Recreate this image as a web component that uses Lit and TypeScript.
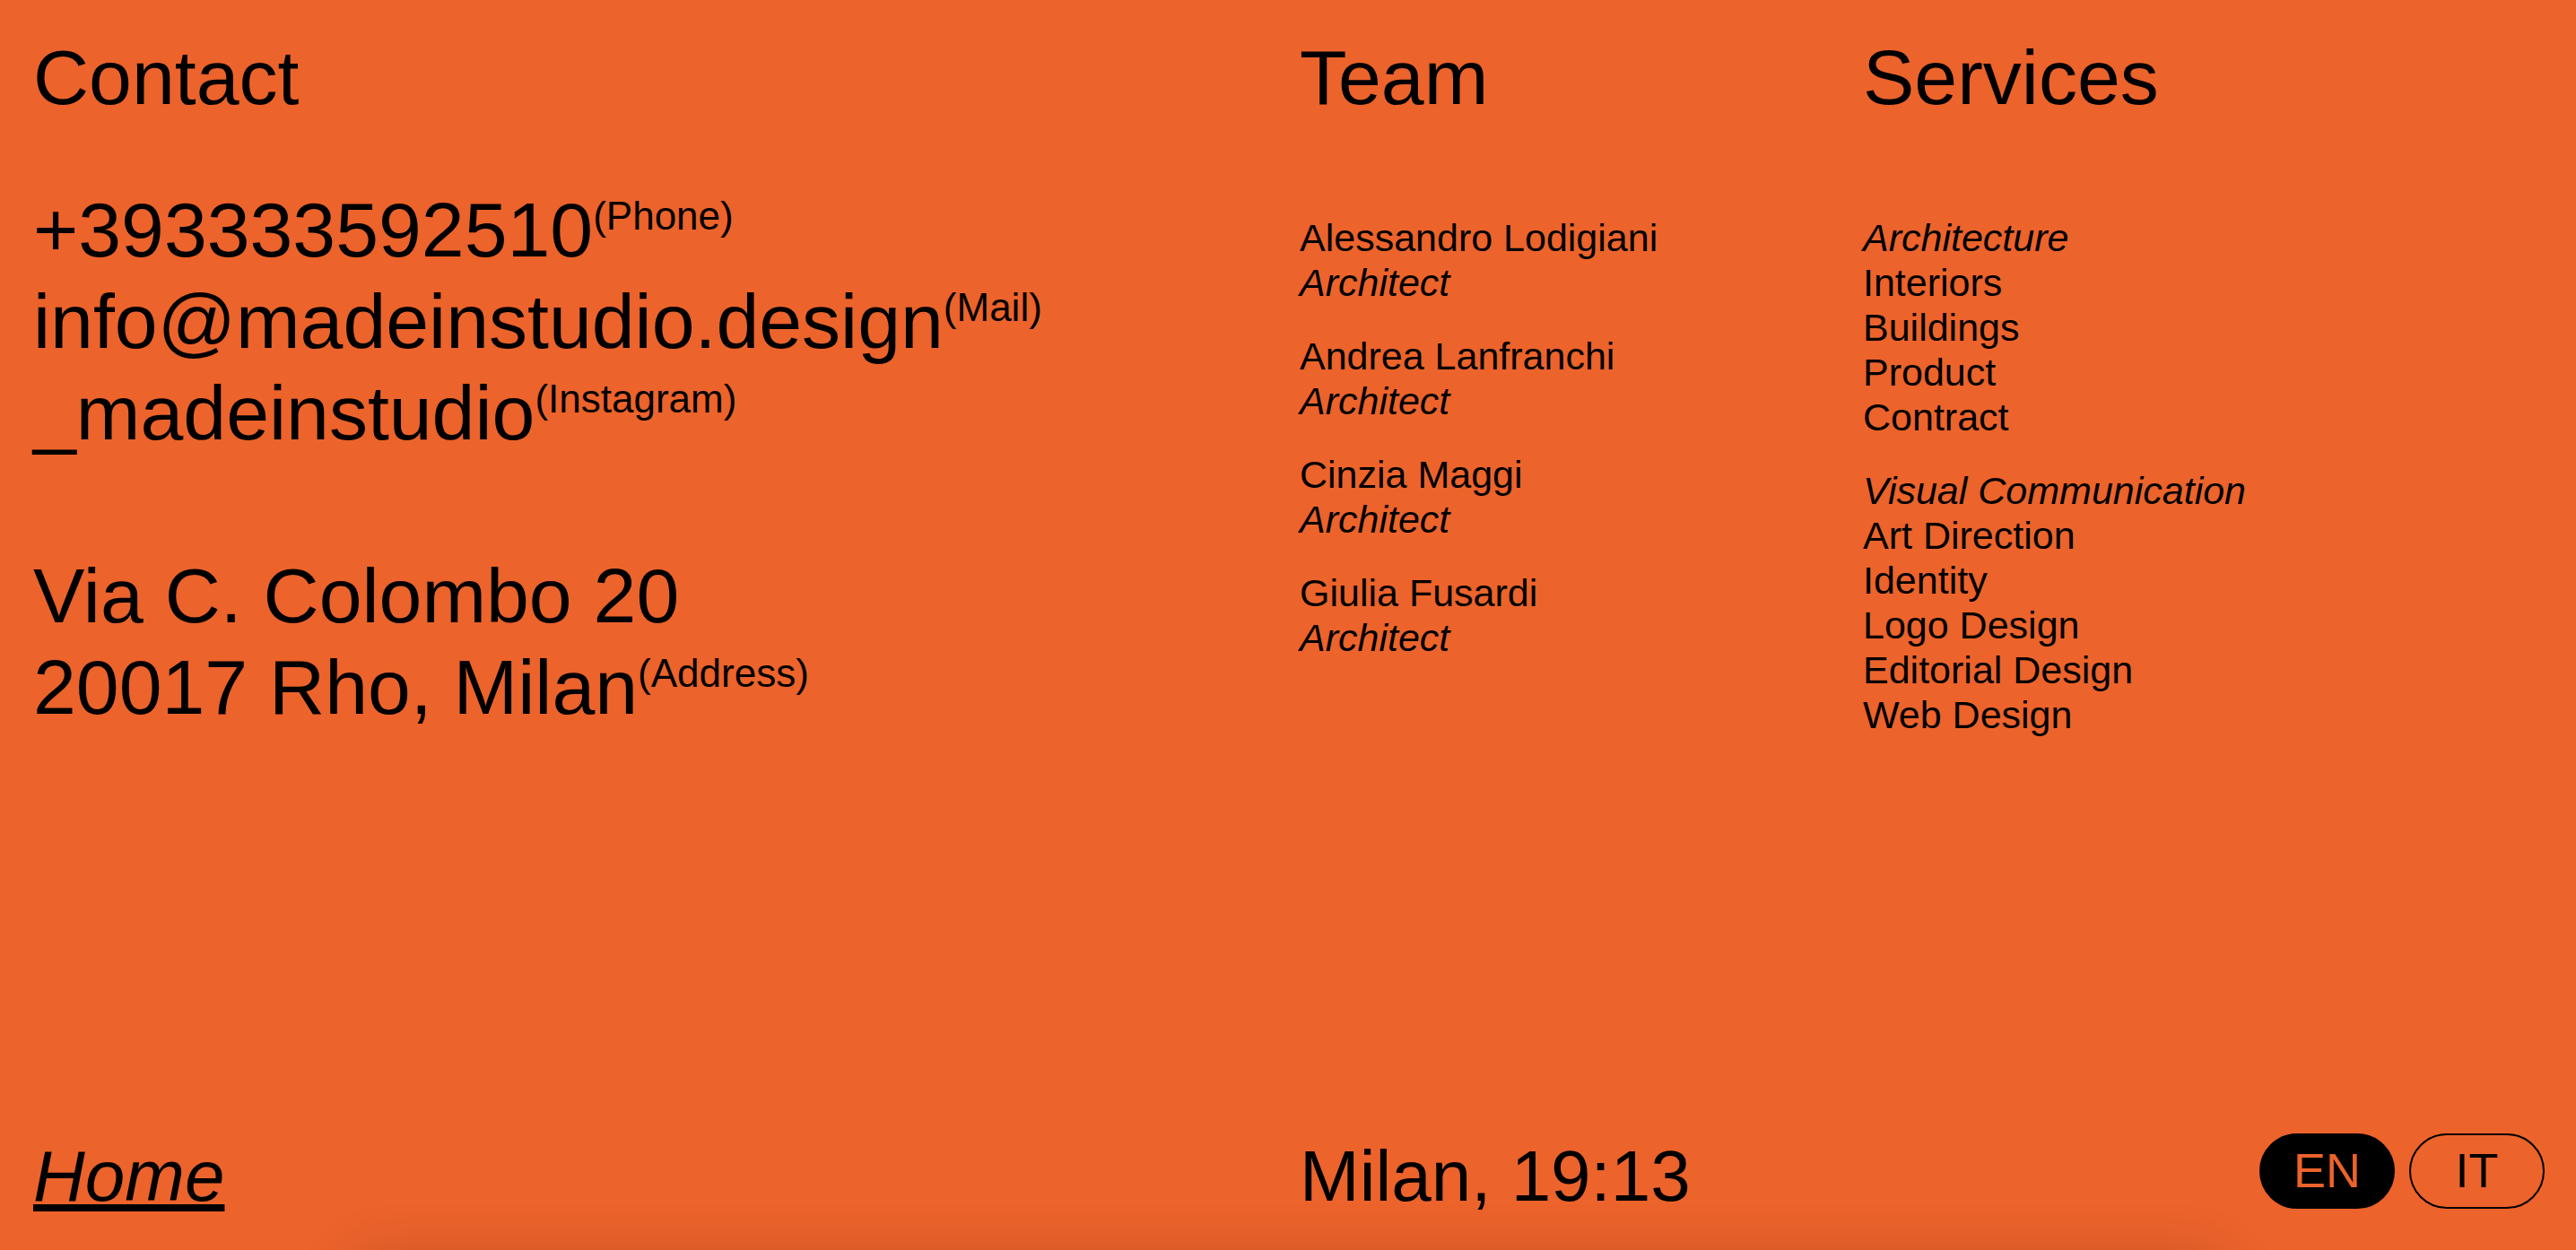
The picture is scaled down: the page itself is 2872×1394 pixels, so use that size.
import { LitElement, html, css } from "lit";
import { customElement, state } from "lit/decorators.js";

const team = ["Alessandro Lodigiani", "Andrea Lanfranchi", "Cinzia Maggi", "Giulia Fusardi"];

const services = [
  { area: "Architecture", items: ["Interiors", "Buildings", "Product", "Contract"] },
  { area: "Visual Communication", items: ["Art Direction", "Identity", "Logo Design", "Editorial Design", "Web Design"] },
];

@customElement("app-root")
class AppRoot extends LitElement {
  static styles = css`
    :host {
      --ink: #000;
      --paper: #ec632b;
      display: block;
      font-family: "Liberation Sans", Arial, Helvetica, sans-serif;
      color: var(--ink);
    }
    * { box-sizing: border-box; }
    h2, h3, p, ul, address { margin: 0; padding: 0; font-size: inherit; font-weight: 400; font-style: normal; }
    ul { list-style: none; }
    a { color: inherit; text-decoration: none; }
    .page {
      position: relative;
      overflow: hidden;
      min-height: 100vh;
      display: flex;
      flex-direction: column;
      justify-content: space-between;
      padding: 35px 35px 34px 37px;
      background: var(--paper);
    }
    /* soft shade rising from the bottom edge */
    .page::after {
      content: "";
      position: absolute;
      left: 14%;
      right: 14%;
      bottom: -220px;
      height: 200px;
      box-shadow: 0 0 68px rgba(0, 0, 0, 0.25);
      pointer-events: none;
    }
    .columns { display: grid; grid-template-columns: 1412fr 628fr 760fr; }
    .title { font-size: 86px; line-height: 102px; }
    .contact { margin-top: 68px; font-size: 86px; line-height: 102px; }
    .contact p { white-space: nowrap; }
    .contact .place { margin-top: 102px; }
    .note { font-size: 44px; line-height: 0; vertical-align: 30px; }
    .lists { display: flex; flex-direction: column; gap: 32px; margin-top: 103px; font-size: 43px; line-height: 50px; }
    .lists .slant { font-style: italic; }
    .footer { display: grid; grid-template-columns: 1412fr 1388fr; font-size: 80px; line-height: 96px; }
    .home {
      justify-self: start;
      font-style: italic;
      text-decoration: underline;
      text-decoration-thickness: 8px;
      text-underline-offset: 4px;
      text-decoration-skip-ink: none;
    }
    .right { display: flex; justify-content: space-between; align-items: flex-start; }
    .languages { display: flex; gap: 16px; }
    .language {
      width: 151px;
      height: 84px;
      padding: 0 0 2px;
      border: 2px solid var(--ink);
      border-radius: 42px;
      background: transparent;
      color: var(--ink);
      font-family: inherit;
      font-size: 54px;
      line-height: 78px;
      cursor: pointer;
    }
    .language.active { background: var(--ink); color: var(--paper); }
  `;

  @state() private language = "EN";

  private languageButton(code: string) {
    const active = this.language === code;
    return html`<button type="button" class="language ${active ? "active" : ""}" aria-pressed=${active}
      @click=${() => (this.language = code)}>${code}</button>`;
  }

  render() {
    return html`
      <div class="page">
        <main class="columns">
          <section>
            <h2 class="title">Contact</h2>
            <address class="contact">
              <p><a href="tel:+393333592510">+393333592510</a><span class="note">(Phone)</span></p>
              <p><a href="mailto:info@madeinstudio.design">info@madeinstudio.design</a><span class="note">(Mail)</span></p>
              <p><a href="#instagram">_madeinstudio</a><span class="note">(Instagram)</span></p>
              <p class="place">Via C. Colombo 20<br />20017 Rho, Milan<span class="note">(Address)</span></p>
            </address>
          </section>
          <section>
            <h2 class="title">Team</h2>
            <ul class="lists">
              ${team.map((name) => html`<li>${name}<p class="slant">Architect</p></li>`)}
            </ul>
          </section>
          <section>
            <h2 class="title">Services</h2>
            <div class="lists">
              ${services.map((group) => html`<div>
                <h3 class="slant">${group.area}</h3>
                <ul>${group.items.map((item) => html`<li>${item}</li>`)}</ul>
              </div>`)}
            </div>
          </section>
        </main>
        <footer class="footer">
          <a class="home" href="#home">Home</a>
          <div class="right">
            <p>Milan, 19:13</p>
            <div class="languages">${this.languageButton("EN")}${this.languageButton("IT")}</div>
          </div>
        </footer>
      </div>
    `;
  }
}
